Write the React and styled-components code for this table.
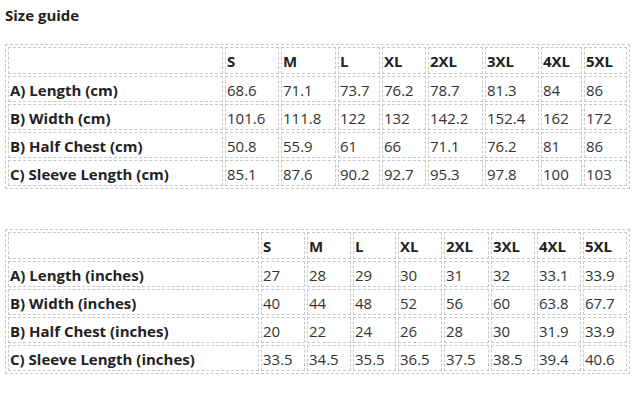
import styled, { createGlobalStyle } from 'styled-components'

const GlobalStyle = createGlobalStyle`
    * {
        box-sizing: border-box;
    }
    body {
        margin: 0;
        background: #fff;
        font-family: "Open Sans", "Noto Sans", sans-serif;
        color: #333;
    }
`

const Page = styled.div`
    padding: 5px 13px 10px 5px;
`

const Title = styled.h3`
    margin: 0 0 19px;
    font-size: 15px;
    line-height: 20px;
    font-weight: 700;
    color: #222;
`

const Table = styled.table`
    width: 100%;
    table-layout: fixed;
    border: 1px dashed #c8c8c8;
    border-spacing: 2px;
    margin-bottom: ${(p) => p.$gap || 0}px;
    font-size: 15px;
    line-height: 20px;
`

const Cell = styled.td`
    border: 1px dashed #c8c8c8;
    padding: 3px 1px ${(p) => (p.as === 'th' ? 2 : 1)}px;
    text-align: left;
    white-space: nowrap;
    font-weight: ${(p) => (p.$bold ? 700 : 400)};
    color: ${(p) => (p.$bold ? '#222' : '#333')};
`

const sizes = ['S', 'M', 'L', 'XL', '2XL', '3XL', '4XL', '5XL']

const cmRows = [
    ['A) Length (cm)', '68.6', '71.1', '73.7', '76.2', '78.7', '81.3', '84', '86'],
    ['B) Width (cm)', '101.6', '111.8', '122', '132', '142.2', '152.4', '162', '172'],
    ['B) Half Chest (cm)', '50.8', '55.9', '61', '66', '71.1', '76.2', '81', '86'],
    ['C) Sleeve Length (cm)', '85.1', '87.6', '90.2', '92.7', '95.3', '97.8', '100', '103'],
]

const inchRows = [
    ['A) Length (inches)', '27', '28', '29', '30', '31', '32', '33.1', '33.9'],
    ['B) Width (inches)', '40', '44', '48', '52', '56', '60', '63.8', '67.7'],
    ['B) Half Chest (inches)', '20', '22', '24', '26', '28', '30', '31.9', '33.9'],
    ['C) Sleeve Length (inches)', '33.5', '34.5', '35.5', '36.5', '37.5', '38.5', '39.4', '40.6'],
]

function SizeTable({ rows, widths, gap }) {
    return (
        <Table $gap={gap}>
            <colgroup>
                {widths.map((w, i) => (
                    <col key={i} width={w} />
                ))}
            </colgroup>
            <thead>
                <tr>
                    <Cell as="th" />
                    {sizes.map((s) => (
                        <Cell as="th" key={s} $bold>{s}</Cell>
                    ))}
                </tr>
            </thead>
            <tbody>
                {rows.map((row) => (
                    <tr key={row[0]}>
                        {row.map((v, i) => (
                            <Cell key={i} $bold={i === 0}>{v}</Cell>
                        ))}
                    </tr>
                ))}
            </tbody>
        </Table>
    )
}

export default function App() {
    return (
        <>
            <GlobalStyle />
            <Page>
                <Title>Size guide</Title>
                <SizeTable rows={cmRows} widths={[215, 54, 55, 42, 44, 55, 54, 41, 43]} gap={40} />
                <SizeTable rows={inchRows} widths={[251, 44, 44, 43, 44, 45, 44, 44, 44]} />
            </Page>
        </>
    )
}
